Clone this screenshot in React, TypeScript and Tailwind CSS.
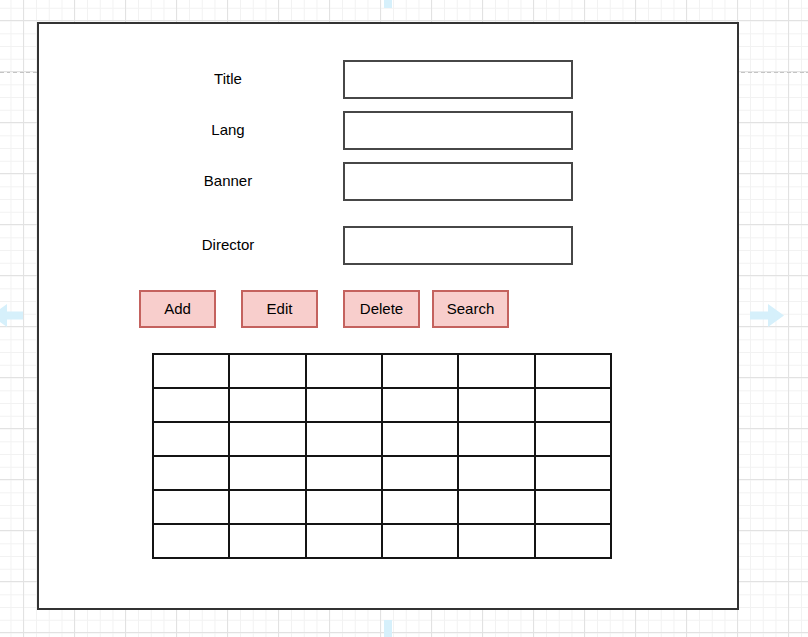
import React from "react";

const fields: { label: string; mt: string }[] = [
  { label: "Title", mt: "mt-0" },
  { label: "Lang", mt: "mt-[12px]" },
  { label: "Banner", mt: "mt-[12px]" },
  { label: "Director", mt: "mt-[25px]" },
];

const buttons: { label: string; ml: string }[] = [
  { label: "Add", ml: "ml-[100px]" },
  { label: "Edit", ml: "ml-[25px]" },
  { label: "Delete", ml: "ml-[25px]" },
  { label: "Search", ml: "ml-[12px]" },
];

const rows = [0, 1, 2, 3, 4, 5];
const cols = [0, 1, 2, 3, 4, 5];

export default function App() {
  return (
    <div
      className="relative w-[808px] h-[637px] overflow-hidden bg-white bg-[image:linear-gradient(to_right,#e2e2e2_1px,transparent_1px),linear-gradient(to_bottom,#e2e2e2_1px,transparent_1px),linear-gradient(to_right,#f2f2f2_1px,transparent_1px),linear-gradient(to_bottom,#f2f2f2_1px,transparent_1px)] bg-[size:51px_51px,51px_51px,12.75px_12.75px,12.75px_12.75px] bg-[position:23px_20px,23px_20px,10.5px_7.8px,10.5px_7.8px]"
      style={{ fontFamily: '"Liberation Sans", Arial, sans-serif' }}
    >
      {/* page break dashed line */}
      <div className="absolute left-0 top-[72px] w-full h-px bg-[image:repeating-linear-gradient(to_right,#c4c4c4_0px,#c4c4c4_4px,transparent_4px,transparent_6.5px)]" />

      {/* hover arrows */}
      <svg className="absolute left-0 top-0" width="808" height="637" viewBox="0 0 808 637">
        <g fill="#d6f0fb">
          <path d="M750 311.5 H768 V304 L784 315.5 L768 327 V319.5 H750 Z" />
          <path d="M23 311.5 H7 V304 L-9 315.5 L7 327 V319.5 H23 Z" />
          <rect x="384" y="0" width="8" height="8" />
          <rect x="384" y="620" width="8" height="17" />
        </g>
      </svg>

      {/* frame */}
      <div className="absolute left-[37px] top-[22px] w-[702px] h-[588px] border-2 border-[#333] bg-white text-[15px] text-black">
        <div className="flex flex-col pt-[36px]">
          {fields.map((f) => (
            <div key={f.label} className={`flex items-center h-[39px] ${f.mt}`}>
              <div className="ml-[89px] w-[200px] text-center leading-none pb-[2px]">{f.label}</div>
              <div className="ml-[15px] w-[230px] h-[39px] border-2 border-[#474747] bg-white" />
            </div>
          ))}

          <div className="flex mt-[25px]">
            {buttons.map((b) => (
              <div
                key={b.label}
                className={`${b.ml} w-[77px] h-[38px] flex items-center justify-center border-2 border-[#c4625e] bg-[#f8cecc] leading-none pb-[2px]`}
              >
                {b.label}
              </div>
            ))}
          </div>

          <div className="mt-[25px] ml-[113px]">
            <table className="border-collapse w-[460px] h-[206px] table-fixed">
              <tbody>
                {rows.map((r) => (
                  <tr key={r}>
                    {cols.map((c) => (
                      <td key={c} className="border-2 border-[#141414] p-0" />
                    ))}
                  </tr>
                ))}
              </tbody>
            </table>
          </div>
        </div>
      </div>
    </div>
  );
}
